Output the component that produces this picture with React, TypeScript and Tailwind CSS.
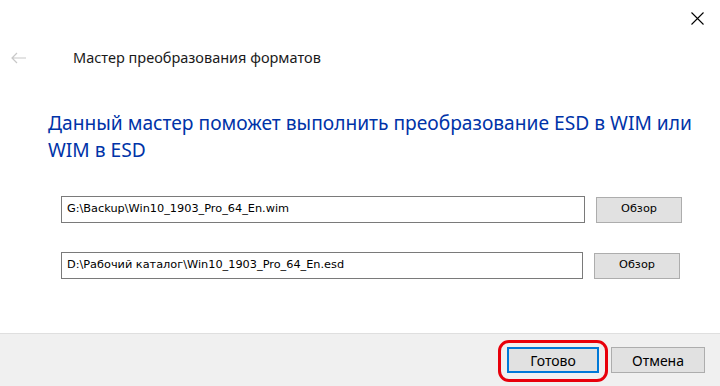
import React from "react";

const segoe = { fontFamily: '"Noto Sans", "Open Sans", sans-serif' };
const tahoma = { fontFamily: '"DejaVu Sans", "Liberation Sans", sans-serif' };

function PathRow({ value, w }: { value: string; w: string }) {
  return (
    <div className="flex items-center">
      <div
        className={`${w} h-[27px] border border-[#7a7a7a] bg-white flex items-center pl-[5px] text-[11.3px] text-black`}
        style={tahoma}
      >
        {value}
      </div>
      <button
        className="ml-[11px] w-[86px] h-[26px] bg-[#e1e1e1] border border-[#adadad] text-[11.3px] text-black flex items-center justify-center"
        style={tahoma}
      >
        Обзор
      </button>
    </div>
  );
}

export default function App() {
  return (
    <div className="w-[720px] h-[386px] bg-white flex flex-col overflow-hidden">
      <div className="h-[38px] flex justify-end items-start">
        <div className="mt-[12px] mr-[16px] w-[13px] h-[13px]">
          <svg width="13" height="13" viewBox="0 0 13 13">
            <path d="M0.5 0.5 L12.5 12.5 M12.5 0.5 L0.5 12.5" stroke="#000" strokeWidth="1.1" fill="none" />
          </svg>
        </div>
      </div>
      <div className="h-[40px] flex items-center">
        <div className="ml-[11px] w-[16px] h-[12px]">
          <svg width="16" height="12" viewBox="0 0 16 12">
            <path d="M1 6 H15 M6 1 L1 6 L6 11" stroke="#c8c8c8" strokeWidth="1.2" fill="none" />
          </svg>
        </div>
        <div className="ml-[46px] text-[14.5px] text-[#1a1a1a]" style={segoe}>
          Мастер преобразования форматов
        </div>
      </div>
      <div
        className="mt-[31px] ml-[48px] w-[660px] text-[19.2px] leading-[27px] text-[#0033a8]"
        style={segoe}
      >
        Данный мастер поможет выполнить преобразование ESD в WIM или WIM в ESD
      </div>
      <div className="ml-[61px] mt-[33px] flex flex-col gap-[29px]">
        <PathRow value="G:\Backup\Win10_1903_Pro_64_En.wim" w="w-[524px]" />
        <PathRow value="D:\Рабочий каталог\Win10_1903_Pro_64_En.esd" w="w-[522px]" />
      </div>
      <div className="mt-auto h-[53px] border-t border-[#dfdfdf] bg-[#f0f0f0] flex items-center justify-end pr-[15px] gap-[12px]">
        <div className="relative">
          <button
            className="w-[92px] h-[26px] bg-[#e1e1e1] border-2 border-[#0078d7] text-[14px] text-black flex items-center justify-center"
            style={segoe}
          >
            Готово
          </button>
          <div className="absolute left-[-9px] top-[-7px] w-[110px] h-[42px] border-[3px] border-[#e8000b] rounded-[11px] pointer-events-none" />
        </div>
        <button
          className="w-[94px] h-[26px] bg-[#e1e1e1] border border-[#adadad] text-[14px] text-black flex items-center justify-center"
          style={segoe}
        >
          Отмена
        </button>
      </div>
    </div>
  );
}
